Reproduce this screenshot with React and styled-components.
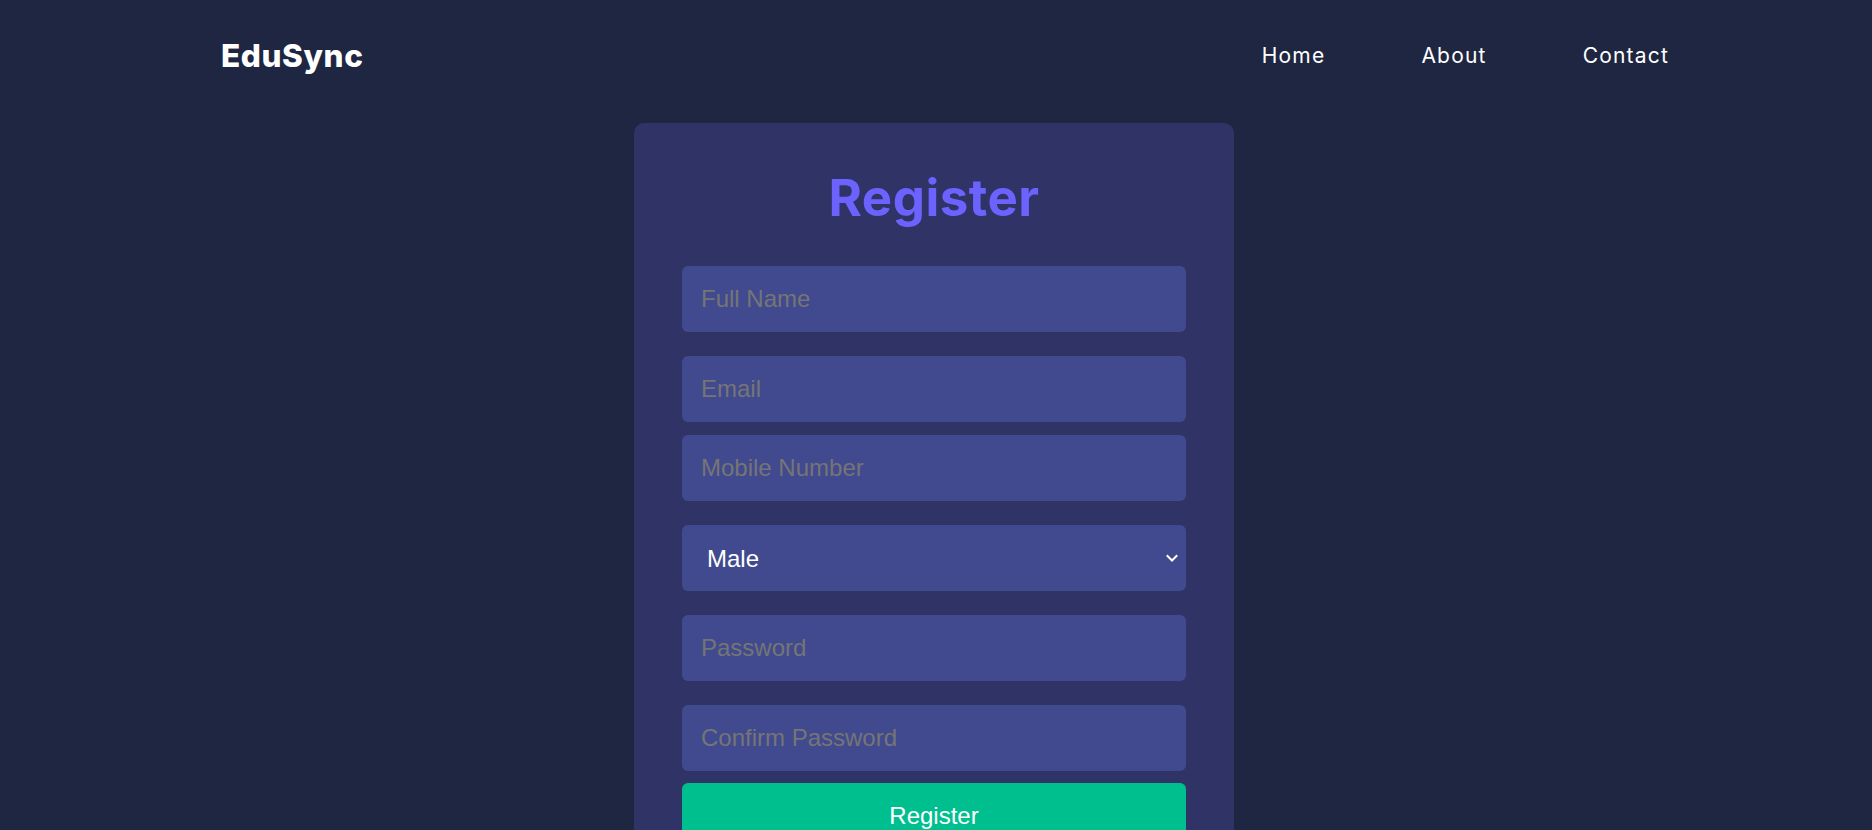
import React from "react";
import styled, { createGlobalStyle } from "styled-components";

const GlobalStyle = createGlobalStyle`
  * { box-sizing: border-box; }
  html, body { margin: 0; padding: 0; background: #1f2642; }
  body { font-family: "Liberation Sans", Arial, sans-serif; color: #ffffff; }
`;

const Page = styled.div`
  min-height: 100vh;
  background: #1f2642;
`;

const Header = styled.header`
  height: 110px;
  padding: 0 203px 0 221px;
  display: flex;
  align-items: center;
  justify-content: space-between;
`;

const Logo = styled.div`
  font-family: Inter, "Noto Sans", sans-serif;
  font-weight: 800;
  font-size: 31.5px;
  letter-spacing: 0.6px;
  color: #ffffff;
`;

const Nav = styled.nav`
  display: flex;
  align-items: center;
  gap: 96px;
`;

const NavLink = styled.a`
  font-family: Inter, "Noto Sans", sans-serif;
  font-weight: 400;
  font-size: 21px;
  letter-spacing: 1.2px;
  color: #ffffff;
  text-decoration: none;
`;

const Main = styled.main`
  display: flex;
  justify-content: center;
  padding: 13px 4px 40px 0;
`;

const Card = styled.section`
  width: 600px;
  background: #2f3366;
  border-radius: 10px;
  padding: 44px 48px 48px;
`;

const Title = styled.h2`
  margin: 0 0 38px;
  text-align: center;
  font-family: Inter, "Noto Sans", sans-serif;
  font-weight: 700;
  font-size: 51px;
  letter-spacing: 0.5px;
  color: #6c63ff;
`;

const Form = styled.form`
  display: flex;
  flex-direction: column;
`;

const fieldBase = `
  width: 100%;
  height: 66px;
  border: none;
  outline: none;
  border-radius: 6px;
  background: #414a8f;
  color: #ffffff;
  font-family: "Liberation Sans", Arial, sans-serif;
  font-size: 24px;
  padding: 0 19px;
`;

const Input = styled.input`
  ${fieldBase}
  margin-top: ${(p) => p.$space}px;
  &::placeholder { color: #757575; }
`;

const SelectWrap = styled.div`
  position: relative;
  margin-top: ${(p) => p.$space}px;
`;

const Select = styled.select`
  ${fieldBase}
  appearance: none;
  -webkit-appearance: none;
  padding: 0 40px 0 25px;
  display: block;
`;

const Chevron = styled.svg`
  position: absolute;
  right: 7px;
  top: 50%;
  width: 14px;
  height: 14px;
  transform: translateY(-50%);
  pointer-events: none;
`;

const Button = styled.button`
  margin-top: 12px;
  width: 100%;
  height: 66px;
  border: none;
  border-radius: 6px;
  background: #00bf8f;
  color: #ffffff;
  font-family: "Liberation Sans", Arial, sans-serif;
  font-size: 24px;
  cursor: pointer;
`;

export default function App() {
  return (
    <Page>
      <GlobalStyle />
      <Header>
        <Logo>EduSync</Logo>
        <Nav>
          <NavLink href="#">Home</NavLink>
          <NavLink href="#">About</NavLink>
          <NavLink href="#">Contact</NavLink>
        </Nav>
      </Header>
      <Main>
        <Card>
          <Title>Register</Title>
          <Form onSubmit={(e) => e.preventDefault()}>
            <Input $space={0} placeholder="Full Name" />
            <Input $space={24} placeholder="Email" />
            <Input $space={13} placeholder="Mobile Number" />
            <SelectWrap $space={24}>
              <Select defaultValue="Male">
                <option>Male</option>
                <option>Female</option>
                <option>Other</option>
              </Select>
              <Chevron viewBox="0 0 14 14" fill="none">
                <path d="M2.5 5 L7 9.5 L11.5 5" stroke="#ffffff" strokeWidth="2" strokeLinecap="square" />
              </Chevron>
            </SelectWrap>
            <Input $space={24} type="password" placeholder="Password" />
            <Input $space={24} type="password" placeholder="Confirm Password" />
            <Button type="submit">Register</Button>
          </Form>
        </Card>
      </Main>
    </Page>
  );
}
